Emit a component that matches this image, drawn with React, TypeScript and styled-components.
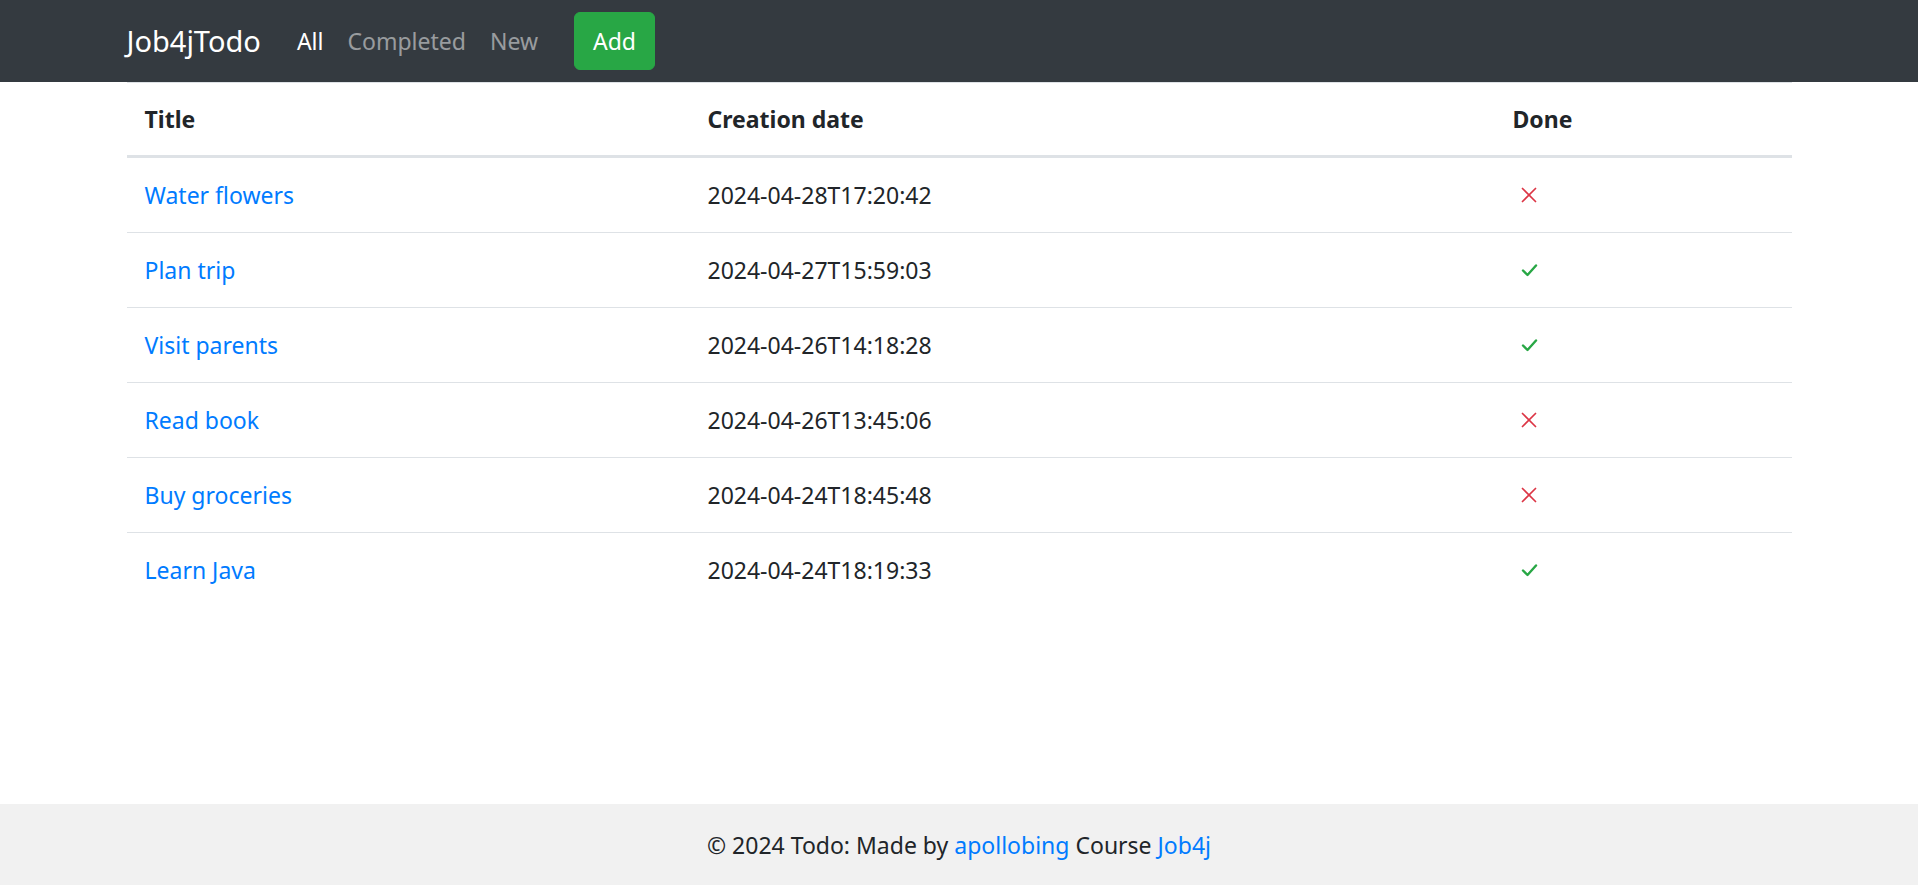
import React from "react";
import styled, { createGlobalStyle } from "styled-components";

const GlobalStyle = createGlobalStyle`
  html, body { margin: 0; padding: 0; }
  body {
    font-family: "Noto Sans", "Open Sans", "Liberation Sans", sans-serif;
    font-size: 23px;
    line-height: 36px;
    color: #212529;
    background: #fff;
  }
  * { box-sizing: border-box; }
`;

const Page = styled.div`
  display: flex;
  flex-direction: column;
  min-height: 100vh;
`;

const Navbar = styled.nav`
  background: #343a40;
  padding: 12px 24px;
`;

const Container = styled.div`
  max-width: 1710px;
  margin: 0 auto;
  padding: 0 22.5px;
  width: 100%;
`;

const NavInner = styled(Container)`
  display: flex;
  align-items: center;
  height: 58px;
`;

const Brand = styled.a`
  font-size: 29px;
  line-height: 44px;
  color: #fff;
  text-decoration: none;
  margin-right: 24px;
`;

const NavLink = styled.a<{ $active?: boolean }>`
  padding: 0 12px;
  color: ${(p) => (p.$active ? "#fff" : "rgba(255,255,255,0.5)")};
  text-decoration: none;
`;

const AddButton = styled.button`
  margin-left: 24px;
  height: 58px;
  padding: 0 18px;
  background: #28a745;
  border: 1px solid #28a745;
  border-radius: 6px;
  color: #fff;
  font: inherit;
  line-height: 36px;
`;

const Main = styled(Container)`
  flex: 1;
`;

const Table = styled.table`
  width: 100%;
  border-collapse: collapse;
`;

const Th = styled.th<{ $w: string }>`
  width: ${(p) => p.$w};
  text-align: left;
  font-weight: 700;
  padding: 18px;
  line-height: 36px;
  border-top: 1px solid #dee2e6;
  border-bottom: 3px solid #dee2e6;
`;

const Td = styled.td`
  padding: 18px;
  line-height: 38px;
  border-top: 1px solid #dee2e6;
  vertical-align: middle;
`;

const TitleLink = styled.a`
  color: #007bff;
  text-decoration: none;
`;

const IconWrap = styled.div`
  display: flex;
  align-items: center;
  height: 38px;
  padding-left: 8px;
`;

const Footer = styled.footer`
  background: #f1f1f1;
  height: 81px;
  display: flex;
  align-items: center;
  justify-content: center;
  font-size: 23px;
  color: #212529;
`;

const FooterLink = styled.a`
  color: #007bff;
  text-decoration: none;
`;

const Cross = () => (
  <svg width="16" height="16" viewBox="0 0 16 16">
    <path d="M1.5 1.5 L14.5 14.5 M14.5 1.5 L1.5 14.5" stroke="#dc3545" strokeWidth="1.7" strokeLinecap="round" fill="none" />
  </svg>
);

const Check = () => (
  <svg width="17" height="14" viewBox="0 0 17 14">
    <path d="M2 7.5 L6.5 12 L15 2.5" stroke="#28a745" strokeWidth="2.4" strokeLinecap="round" strokeLinejoin="round" fill="none" />
  </svg>
);

const tasks = [
  { title: "Water flowers", date: "2024-04-28T17:20:42", done: false },
  { title: "Plan trip", date: "2024-04-27T15:59:03", done: true },
  { title: "Visit parents", date: "2024-04-26T14:18:28", done: true },
  { title: "Read book", date: "2024-04-26T13:45:06", done: false },
  { title: "Buy groceries", date: "2024-04-24T18:45:48", done: false },
  { title: "Learn Java", date: "2024-04-24T18:19:33", done: true },
];

export default function App() {
  return (
    <Page>
      <GlobalStyle />
      <Navbar>
        <NavInner>
          <Brand href="#">Job4jTodo</Brand>
          <NavLink href="#" $active>All</NavLink>
          <NavLink href="#">Completed</NavLink>
          <NavLink href="#">New</NavLink>
          <AddButton>Add</AddButton>
        </NavInner>
      </Navbar>
      <Main>
        <Table>
          <thead>
            <tr>
              <Th $w="563px">Title</Th>
              <Th $w="805px">Creation date</Th>
              <Th $w="auto">Done</Th>
            </tr>
          </thead>
          <tbody>
            {tasks.map((t) => (
              <tr key={t.title}>
                <Td>
                  <TitleLink href="#">{t.title}</TitleLink>
                </Td>
                <Td>{t.date}</Td>
                <Td>
                  <IconWrap>{t.done ? <Check /> : <Cross />}</IconWrap>
                </Td>
              </tr>
            ))}
          </tbody>
        </Table>
      </Main>
      <Footer>
        <span>
          © 2024 Todo: Made by <FooterLink href="#">apollobing</FooterLink> Course{" "}
          <FooterLink href="#">Job4j</FooterLink>
        </span>
      </Footer>
    </Page>
  );
}
